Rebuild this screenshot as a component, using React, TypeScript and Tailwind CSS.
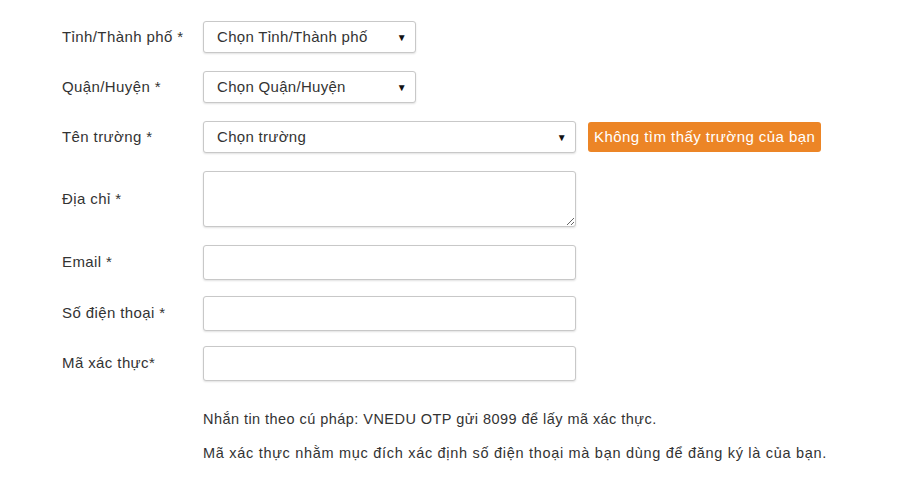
const font = { fontFamily: '"Liberation Sans", Arial, sans-serif' };

function Row({ label, children, className = "" }: { label: string; children: React.ReactNode; className?: string }) {
  return (
    <div className={`flex items-center ${className}`}>
      <label className="w-[141px] shrink-0 text-[15px] tracking-[0.4px] text-[#333]">{label}</label>
      {children}
    </div>
  );
}

function FakeSelect({ text, width }: { text: string; width: string }) {
  return (
    <div
      className={`flex h-[32px] ${width} items-center justify-between rounded-[3px] border border-[#c8c8c8] bg-white pl-[13px] pr-[8px] text-[15px] tracking-[0.3px] text-[#333] shadow-[0_1px_2px_rgba(0,0,0,0.12)]`}
    >
      <span>{text}</span>
      <span className="text-[10px] text-[#111]">▼</span>
    </div>
  );
}

const inputCls =
  "h-[35px] w-[373px] rounded-[3px] border border-[#c8c8c8] bg-white shadow-[0_1px_2px_rgba(0,0,0,0.12)] outline-none";

export default function App() {
  return (
    <div className="h-[480px] w-[900px] bg-white pl-[62px] pt-[21px]" style={font}>
      <Row label="Tỉnh/Thành phố *">
        <FakeSelect text="Chọn Tỉnh/Thành phố" width="w-[213px]" />
      </Row>
      <Row label="Quận/Huyện *" className="mt-[18px]">
        <FakeSelect text="Chọn Quận/Huyện" width="w-[213px]" />
      </Row>
      <Row label="Tên trường *" className="mt-[18px]">
        <FakeSelect text="Chọn trường" width="w-[373px]" />
        <button className="ml-[12px] h-[30px] rounded-[3px] bg-[#ec8526] px-[6px] text-[15px] tracking-[0.45px] text-white">
          Không tìm thấy trường của bạn
        </button>
      </Row>
      <Row label="Địa chỉ *" className="mt-[18px]">
        <textarea className={`${inputCls} h-[56px] resize`} />
      </Row>
      <Row label="Email *" className="mt-[18px]">
        <input className={inputCls} />
      </Row>
      <Row label="Số điện thoại *" className="mt-[16px]">
        <input className={inputCls} />
      </Row>
      <Row label="Mã xác thực*" className="mt-[15px]">
        <input className={inputCls} />
      </Row>
      <div className="ml-[141px] mt-[21px] text-[14.5px] leading-[34px] tracking-[0.45px] text-[#333]">
        <p>Nhắn tin theo cú pháp: VNEDU OTP gửi 8099 để lấy mã xác thực.</p>
        <p className="tracking-[0.7px]">
          Mã xác thực nhằm mục đích xác định số điện thoại mà bạn dùng để đăng ký là của bạn.
        </p>
      </div>
    </div>
  );
}
